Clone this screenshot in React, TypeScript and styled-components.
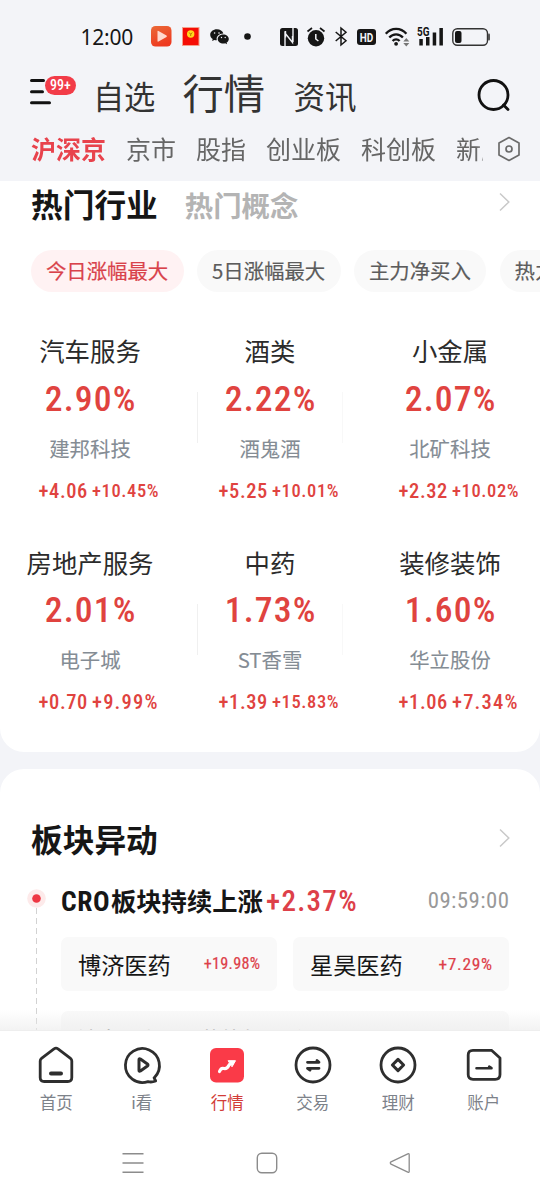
import React from "react";
import styled, { createGlobalStyle } from "styled-components";

const cjk = `"Noto Sans CJK SC", "Noto Sans", sans-serif`;
const num = `Roboto, "Noto Sans CJK SC", sans-serif`;
const red = "#e0433f";

const Global = createGlobalStyle`
  * { box-sizing: border-box; }
  body { margin: 0; background: #f3f4f8; }
`;

const Screen = styled.div`
  width: 540px;
  height: 1200px;
  display: flex;
  flex-direction: column;
  overflow: hidden;
  background: #f3f4f8;
  font-family: ${cjk};
  white-space: nowrap;
`;

const Text = styled.span<{ $size: number; $color?: string; $weight?: number; $stroke?: number; $ls?: number }>`
  font-size: ${(p) => p.$size}px;
  color: ${(p) => p.$color ?? "#333"};
  font-weight: ${(p) => p.$weight ?? 400};
  letter-spacing: ${(p) => p.$ls ?? 0}px;
  -webkit-text-stroke: ${(p) => p.$stroke ?? 0}px currentColor;
`;

const Digits = styled(Text)`
  font-family: ${num};
  font-stretch: 86%;
  margin-right: ${(p) => -(p.$ls ?? 0)}px;
`;

/* status bar */
const StatusBar = styled.div`
  flex: none;
  height: 73px;
  padding-left: 80.5px;
  display: flex;
  align-items: center;
`;

const Clock = styled.span`
  width: 53px;
  font: 400 21px "Noto Sans", sans-serif;
  letter-spacing: -0.2px;
  color: #161616;
`;

const Glyph = styled.svg<{ $gap?: number }>`
  display: block;
  flex: none;
  margin-left: ${(p) => p.$gap ?? 0}px;
  overflow: visible;
`;

/* header */
const Header = styled.header`
  flex: none;
  height: 43px;
  padding: 0 29px 0 29px;
  display: flex;
  align-items: center;
`;

const MenuButton = styled.div`
  position: relative;
  width: 64px;
  height: 36px;
`;

const Badge = styled.span`
  position: absolute;
  left: 16px;
  top: -0.5px;
  width: 31px;
  height: 19px;
  border-radius: 10px;
  background: #f23c48;
  color: #fff;
  font: 500 14px/19.5px ${num};
  font-stretch: 86%;
  text-align: center;
`;

const MainTabs = styled.nav`
  flex: 1;
  padding-bottom: 2px;
  display: flex;
  align-items: baseline;
  line-height: 46px;
`;

const MainTab = styled(Text)<{ $w: number }>`
  width: ${(p) => p.$w}px;
`;

/* market categories */
const Categories = styled.nav`
  flex: none;
  height: 65px;
  padding: 0 19px 0 31px;
  display: flex;
  align-items: center;
  justify-content: space-between;
`;

const CategoryList = styled.div`
  width: 451.5px;
  padding-bottom: 2px;
  display: flex;
  gap: 20px;
  overflow: hidden;
  line-height: 36px;
  mask-image: linear-gradient(90deg, #000 445px, rgba(0, 0, 0, 0.55) 452px);
`;

/* content */
const Content = styled.main`
  position: relative;
  flex: none;
  height: 849px;
  display: flex;
  flex-direction: column;
  gap: 17px;
  overflow: hidden;
`;

const HotCard = styled.section`
  flex: none;
  height: 571px;
  background: #fff;
  border-radius: 0 0 24px 24px;
  overflow: hidden;
`;

const MoveCard = styled.section`
  flex: none;
  height: 400px;
  padding-top: 45px;
  background: #fff;
  border-radius: 24px 24px 0 0;
`;

const TitleRow = styled.div<{ $lift?: number }>`
  height: 47px;
  padding: 0 30px ${(p) => p.$lift ?? 0}px 31px;
  display: flex;
  align-items: center;
  gap: 27px;
  line-height: 44px;
`;

const Subtitle = styled(Text)`
  padding-top: 3px;
`;

const Push = styled.span<{ $up?: number }>`
  margin-left: auto;
  padding-bottom: ${(p) => p.$up ?? 0}px;
`;

const Chips = styled.div`
  margin-top: 22px;
  padding-left: 31px;
  display: flex;
  gap: 13.5px;
`;

const Chip = styled.span<{ $active?: boolean }>`
  flex: none;
  height: 41.5px;
  padding: 0 15.3px 0 14.9px;
  border-radius: 21px;
  background: ${(p) => (p.$active ? "#fff2f3" : "#f9f9f9")};
  color: ${(p) => (p.$active ? "#d9424b" : "#5c5c5c")};
  font-size: 20.4px;
  line-height: 41px;
  -webkit-text-stroke: 0.2px currentColor;
`;

const Sectors = styled.div`
  margin-top: 35.5px;
  display: grid;
  grid-template-columns: repeat(3, 180px);
  grid-auto-rows: 211.5px;
`;

const Sector = styled.div<{ $line: number }>`
  position: relative;
  display: flex;
  flex-direction: column;
  align-items: center;

  &::before {
    content: "";
    display: ${(p) => (p.$line ? "block" : "none")};
    position: absolute;
    left: ${(p) => (p.$line === 1 ? 17 : -18)}px;
    top: 65px;
    width: 1px;
    height: 51px;
    background: ${(p) => (p.$line === 1 ? "#f0f0f0" : "#f8f8f8")};
  }
`;

const Line = styled.div<{ $h: number }>`
  height: ${(p) => p.$h}px;
  display: flex;
  align-items: center;
`;

const ChangeLine = styled(Line)`
  align-self: flex-start;
  padding-left: 38.5px;
`;

const FirstValue = styled.span`
  width: 53.5px;
`;

/* sector movements */
const Event = styled.div`
  margin-top: 14px;
  display: flex;
`;

const Rail = styled.div`
  width: 61px;
  padding: 14px 0 0 27px;
`;

const EventBody = styled.div`
  width: 448px;
`;

const EventHead = styled.div`
  height: 60px;
  padding-bottom: 9px;
  display: flex;
  align-items: center;
`;

const EventTitle = styled.span`
  width: 205px;
  padding-bottom: 2px;
  display: flex;
  align-items: baseline;
  gap: 1.5px;
`;

const StockRow = styled.div`
  margin-top: 2px;
  display: flex;
  gap: 16px;
`;

const Stock = styled.div`
  flex: 1;
  height: 54px;
  padding: 0 17px 1px 17px;
  display: flex;
  align-items: center;
  justify-content: space-between;
  border-radius: 7px;
  background: #f9f9f9;
`;

const Note = styled.div`
  margin-top: 20px;
  height: 80px;
  padding: 10.5px 17px 0;
  border-radius: 7px;
  background: #f9f9f9;
  line-height: 32px;
`;

const Fade = styled.div`
  position: absolute;
  inset: auto 0 0 0;
  height: 20px;
  background: linear-gradient(rgba(235, 235, 235, 0), rgba(235, 235, 235, 0.6));
`;

/* bottom bars */
const TabBar = styled.nav`
  flex: none;
  height: 96px;
  padding: 15px 13.5px 0;
  display: grid;
  grid-template-columns: repeat(6, 1fr);
  background: #fff;
  border-top: 1px solid #eeeeee;
`;

const TabItem = styled.div<{ $active?: boolean }>`
  display: flex;
  flex-direction: column;
  align-items: center;
  color: ${(p) => (p.$active ? "#d23c37" : "#7d828a")};
  font-size: 16.5px;
  line-height: 26px;
  gap: 4.5px;
`;

const SystemBar = styled.div`
  flex: none;
  height: 74px;
  padding: 0 129px 0 122px;
  display: flex;
  align-items: center;
  justify-content: space-between;
  background: #fff;
`;

const Chevron = () => (
  <Glyph width="11" height="20" viewBox="0 0 11 20" fill="none" stroke="#c9c9c9" strokeWidth="1.5">
    <path d="M1 1.500 9.800 10 1 18.500" />
  </Glyph>
);

const StatusIcons = () => (
  <>
    <Glyph $gap={17.500} width="20.500" height="20.500" viewBox="0 0 20.5 20.5">
      <defs>
        <linearGradient id="play" x1="0" y1="0" x2="0.4" y2="1">
          <stop offset="0" stopColor="#ea6a38" />
          <stop offset="1" stopColor="#ee3a20" />
        </linearGradient>
      </defs>
      <rect width="20.5" height="20.5" rx="4.500" fill="url(#play)" />
      <path d="M6.500 5.500v9.500q0 1 1 .500l8-4.500q.800-.700 0-1.400l-8-4.600q-1-.500-1 .500z" fill="#ffd9cf" />
    </Glyph>
    <Glyph $gap={10} width="17.500" height="19" viewBox="0 0 17.5 19">
      <rect x="0.500" y="0.500" width="16.500" height="18" fill="#f50d05" stroke="#f4a08c" />
      <circle cx="8.700" cy="7" r="3.700" fill="#ffd91c" />
      <path d="M7.200 5.500 8.700 7.300l1.500-1.800M8.700 7.300V9" stroke="#b06a00" strokeWidth="0.900" fill="none" />
    </Glyph>
    <Glyph $gap={10.500} width="19" height="16" viewBox="0 0 19 16" fill="#161616">
      <path d="M6.900.3C3.200.3.200 2.700.2 5.800c0 1.800 1 3.300 2.500 4.300l-.6 2 2.300-1.200c.8.200 1.600.3 2.400.3-.9-3.700 2.300-6.700 6.600-6.600C12.700 2.100 10 .3 6.900.3z" />
      <path d="M18.800 9.900c0-2.500-2.500-4.500-5.500-4.500s-5.600 2-5.600 4.500 2.500 4.600 5.600 4.600c.7 0 1.300-.1 1.900-.3l1.900 1-.5-1.700c1.400-.8 2.200-2.100 2.200-3.600z" />
      <g fill="#f3f4f8">
        <circle cx="4.600" cy="4" r=".8" /><circle cx="9" cy="4" r=".8" />
        <circle cx="11.500" cy="8.500" r=".7" /><circle cx="15.200" cy="8.500" r=".7" />
      </g>
    </Glyph>
    <Glyph $gap={15.500} width="7" height="7" viewBox="0 0 7 7"><circle cx="3.500" cy="3.500" r="3.300" fill="#161616" /></Glyph>
    <Glyph $gap={28.500} width="18" height="18" viewBox="0 0 18 18">
      <rect width="18" height="18" rx="2.500" fill="#161616" />
      <path d="M5 18V5l7.500 9.500V8M5.500 9.500V3M13 0v14" fill="none" stroke="#f3f4f8" strokeWidth="1.400" />
    </Glyph>
    <Glyph $gap={9} width="18" height="20" viewBox="0 0 18 20" fill="none" stroke="#161616">
      <circle cx="9" cy="11.300" r="8.200" fill="#161616" stroke="none" />
      <path d="M.5 4.500 5 1M17.500 4.500 13 1" strokeWidth="1.700" />
      <path d="M8.800 7v5l2.600 2" stroke="#f3f4f8" strokeWidth="1.500" />
    </Glyph>
    <Glyph $gap={10} width="12" height="19" viewBox="0 0 12 19" fill="none" stroke="#161616" strokeWidth="1.500">
      <path d="M.7 5 11 13.800 6 18V1l5 4.200L.7 14" />
    </Glyph>
    <Glyph $gap={10} width="19" height="16" viewBox="0 0 19 16">
      <rect width="19" height="16" rx="3" fill="#161616" />
      <text x="9.500" y="12.500" textAnchor="middle" fontFamily="Roboto" fontWeight="700" fontSize="12.500" textLength="13.500" lengthAdjust="spacingAndGlyphs" fill="#f3f4f8">HD</text>
    </Glyph>
    <Glyph $gap={9} width="24" height="19" viewBox="0 0 24 19" fill="none" stroke="#161616" strokeWidth="2.300">
      <path d="M.8 6.800C6.500.1 15.700.1 21.400 6.800M4.300 10.500c3.800-4.300 9.800-4.300 13.600 0M7.600 14c2-2.300 5-2.300 7 0" />
      <circle cx="11.100" cy="16.800" r="1.900" fill="#161616" stroke="none" />
      <path d="M18.300 14.500 21.300 11l3 3.500zM18.300 16l3 3.500 3-3.500z" fill="#777" stroke="none" />
    </Glyph>
    <Glyph $gap={8} width="26" height="19" viewBox="0 0 26 19" fill="#161616">
      <rect x="2.300" y="12" width="3.500" height="6.500" /><rect x="9" y="10" width="3.500" height="8.500" />
      <rect x="15.700" y="5.500" width="3.500" height="13" /><rect x="22.400" y="1" width="3.500" height="17.500" />
      <text x="0" y="9" fontFamily="Roboto" fontWeight="700" fontSize="12" textLength="12.500" lengthAdjust="spacingAndGlyphs">5G</text>
    </Glyph>
    <Glyph $gap={9} width="38" height="18" viewBox="0 0 38 18">
      <rect x=".8" y=".8" width="34.700" height="16.400" rx="4.500" fill="none" stroke="#333" strokeWidth="1.400" />
      <rect x="3" y="3" width="6.500" height="12" rx="2" fill="#161616" />
      <rect x="36" y="5.500" width="2" height="7" rx="1" fill="#555" />
    </Glyph>
  </>
);

type SectorData = { name: string; pct: string; stock: string; diff: string; rate: string; small?: boolean };
const sectors: SectorData[] = [
  { name: "汽车服务", pct: "2.90%", stock: "建邦科技", diff: "+4.06", rate: "+10.45%", small: true },
  { name: "酒类", pct: "2.22%", stock: "酒鬼酒", diff: "+5.25", rate: "+10.01%", small: true },
  { name: "小金属", pct: "2.07%", stock: "北矿科技", diff: "+2.32", rate: "+10.02%", small: true },
  { name: "房地产服务", pct: "2.01%", stock: "电子城", diff: "+0.70", rate: "+9.99%" },
  { name: "中药", pct: "1.73%", stock: "ST香雪", diff: "+1.39", rate: "+15.83%", small: true },
  { name: "装修装饰", pct: "1.60%", stock: "华立股份", diff: "+1.06", rate: "+7.34%" },
];

const TabIcon = ({ children }: { children: React.ReactNode }) => (
  <Glyph width="38" height="38" viewBox="0 0 38 38" fill="none" stroke="#2e2e2e" strokeWidth="2.800" strokeLinejoin="round" strokeLinecap="round">
    {children}
  </Glyph>
);

const tabs: { label: string; active?: boolean; icon: React.ReactNode }[] = [
  {
    label: "首页",
    icon: (
      <>
        <path d="M17 2.800 4.500 12.300Q3.200 13.300 3.200 15v16.500q0 4 4 4h23.600q4 0 4-4V15q0-1.700-1.300-2.700L21 2.800q-2-1.300-4 0z" />
        <path d="M14 27.500h10" strokeWidth="4" />
      </>
    ),
  },
  {
    label: "i看",
    icon: (
      <>
        <path d="M31.500 31.500A17 17 0 1 0 25 35.600q3.500 1 7.700-.600l-1.600-3.200" />
        <path d="M16 13.800v10.400q0 1.500 1.400.700l7-4.900q1.200-1 0-2l-7-4.900q-1.400-.800-1.400.700z" strokeWidth="3" />
      </>
    ),
  },
  {
    label: "行情",
    active: true,
    icon: (
      <>
        <rect x="2" y="2" width="34" height="34.500" rx="6" fill="#fa3a48" stroke="none" />
        <path d="M11.500 25.500Q13 21.500 16 22.500q3 .500 4.500-2.500 1-2.500 4-3" stroke="#fff" strokeWidth="3.200" />
        <path d="M20.500 14.700h7l-3.300 5.800z" fill="#fff" stroke="#fff" strokeWidth="1" />
      </>
    ),
  },
  {
    label: "交易",
    icon: (
      <>
        <circle cx="19" cy="19" r="17" />
        <path d="M13.500 16.300h11.500l-2-1.800M25 22.300H13.500l2.500 1.800" />
      </>
    ),
  },
  {
    label: "理财",
    icon: (
      <>
        <circle cx="19" cy="19" r="17" />
        <path d="m19 13.400 5.600 5.600-5.600 5.600-5.600-5.600z" strokeWidth="3" />
      </>
    ),
  },
  {
    label: "账户",
    icon: (
      <>
        <path d="M8 4.300h18.500L35 12V28.500q0 4.800-4.800 4.800H8Q3.200 33.300 3.200 28.500V9.100Q3.200 4.300 8 4.300z" />
        <path d="M11.500 22.200H26.500l-2.300-1.500" strokeWidth="2.600" />
      </>
    ),
  },
];

export default function App() {
  return (
    <Screen>
      <Global />
      <StatusBar>
        <Clock>12:00</Clock>
        <StatusIcons />
      </StatusBar>

      <Header>
        <MenuButton>
          <Glyph width="23" height="30" viewBox="0 0 23 30" stroke="#111" strokeWidth="3" strokeLinecap="round">
            <path d="M2.500 3.500h12M2.500 14.700h11M2.500 25.700h18" />
          </Glyph>
          <Badge>99+</Badge>
        </MenuButton>
        <MainTabs>
          <MainTab $size={31.300} $w={89.500} $ls={-0.3}>自选</MainTab>
          <MainTab $size={41.300} $w={111}>行情</MainTab>
          <MainTab $size={31.500} $w={80}>资讯</MainTab>
        </MainTabs>
        <Glyph width="34" height="34" viewBox="0 0 34 34" fill="none" stroke="#111" strokeWidth="2.800">
          <circle cx="16.500" cy="17" r="14.500" />
          <path d="m26.500 27 4.500 4.500" strokeLinecap="round" />
        </Glyph>
      </Header>

      <Categories>
        <CategoryList>
          <Text $size={25} $weight={700} $color="#e8434d">沪深京</Text>
          {["京市", "股指", "创业板", "科创板", "新股"].map((t) => (
            <Text key={t} $size={25} $color="#666">{t}</Text>
          ))}
        </CategoryList>
        <Glyph width="24" height="26" viewBox="0 0 24 26" fill="none" stroke="#6b6b6b" strokeWidth="1.700" strokeLinejoin="round">
          <path d="M12 1.500 22 7v12l-10 5.500L2 19V7z" />
          <circle cx="12" cy="13" r="3" />
        </Glyph>
      </Categories>

      <Content>
        <HotCard>
          <TitleRow $lift={3}>
            <Text $size={31.700} $weight={700} $color="#161616">热门行业</Text>
            <Subtitle $size={28.400} $weight={700} $color="#b4b4b4">热门概念</Subtitle>
            <Push $up={3}><Chevron /></Push>
          </TitleRow>
          <Chips>
            <Chip $active>今日涨幅最大</Chip>
            <Chip>5日涨幅最大</Chip>
            <Chip>主力净买入</Chip>
            <Chip>热力图</Chip>
          </Chips>
          <Sectors>
            {sectors.map((s, i) => (
              <Sector key={s.name} $line={i % 3}>
                <Line $h={46}><Text $size={25.400} $color="#2b2b2b">{s.name}</Text></Line>
                <Line $h={51}><Digits $size={35.6} $weight={500} $color={red} $ls={1.2}>{s.pct}</Digits></Line>
                <Line $h={47}><Text $size={20.400} $color="#848c94" $stroke={0.1}>{s.stock}</Text></Line>
                <ChangeLine $h={39}>
                  <FirstValue><Digits $size={20.5} $weight={500} $color={red} $ls={0.6}>{s.diff}</Digits></FirstValue>
                  <Digits
                    $size={s.small ? 18.5 : 20.5}
                    $weight={500}
                    $color={red}
                    $ls={s.small ? 0.6 : 1.2}
                  >
                    {s.rate}
                  </Digits>
                </ChangeLine>
              </Sector>
            ))}
          </Sectors>
        </HotCard>

        <MoveCard>
          <TitleRow>
            <Text $size={31.700} $weight={700} $color="#161616">板块异动</Text>
            <Push><Chevron /></Push>
          </TitleRow>
          <Event>
            <Rail>
              <Glyph width="19" height="170" viewBox="0 0 19 170">
                <circle cx="9.500" cy="9.500" r="9.300" fill="#fdeaea" />
                <circle cx="9.500" cy="9.500" r="4.300" fill="#ee3743" />
                <path d="M9.500 19V170" stroke="#d2d2d2" strokeDasharray="6 4" />
              </Glyph>
            </Rail>
            <EventBody>
              <EventHead>
                <EventTitle>
                  <Digits $size={27.5} $weight={700} $color="#161616" $ls={0.5}>CRO</Digits>
                  <Text $size={25.300} $weight={700} $color="#161616">板块持续上涨</Text>
                </EventTitle>
                <Digits $size={29} $weight={500} $color="#dd4049" $ls={1.3}>+2.37%</Digits>
                <Push><Digits $size={22.800} $color="#999" $ls={0.45}>09:59:00</Digits></Push>
              </EventHead>
              <StockRow>
                <Stock>
                  <Text $size={23.200} $color="#161616">博济医药</Text>
                  <Digits $size={16.2} $color="#dd4049" $stroke={0.2} $ls={0.3}>+19.98%</Digits>
                </Stock>
                <Stock>
                  <Text $size={23.200} $color="#161616">星昊医药</Text>
                  <Digits $size={17.4} $color="#dd4049" $stroke={0.2} $ls={0.7}>+7.29%</Digits>
                </Stock>
              </StockRow>
              <Note><Text $size={20.400} $color="#666">消息面上，医药外包回暖</Text></Note>
            </EventBody>
          </Event>
        </MoveCard>
        <Fade />
      </Content>

      <TabBar>
        {tabs.map((t) => (
          <TabItem key={t.label} $active={t.active}>
            <TabIcon>{t.icon}</TabIcon>
            {t.label}
          </TabItem>
        ))}
      </TabBar>

      <SystemBar>
        <Glyph width="22" height="22" viewBox="0 0 22 22" stroke="#8c8c8c" strokeWidth="1.500">
          <path d="M.5 1.700h21M.5 11h21M.5 20.300h21" />
        </Glyph>
        <Glyph width="22" height="22" viewBox="0 0 22 22" fill="none" stroke="#8c8c8c" strokeWidth="1.400">
          <rect x="1.300" y="1.300" width="19.400" height="19.400" rx="4.500" />
        </Glyph>
        <Glyph width="22" height="22" viewBox="0 0 22 22" fill="none" stroke="#8c8c8c" strokeWidth="1.300" strokeLinejoin="round">
          <path d="M18.800 1.800 2 9.800q-1.400 1.200 0 2.400l16.800 8q1.400.400 1.400-1V2.800q0-1.500-1.400-1z" />
        </Glyph>
      </SystemBar>
    </Screen>
  );
}
